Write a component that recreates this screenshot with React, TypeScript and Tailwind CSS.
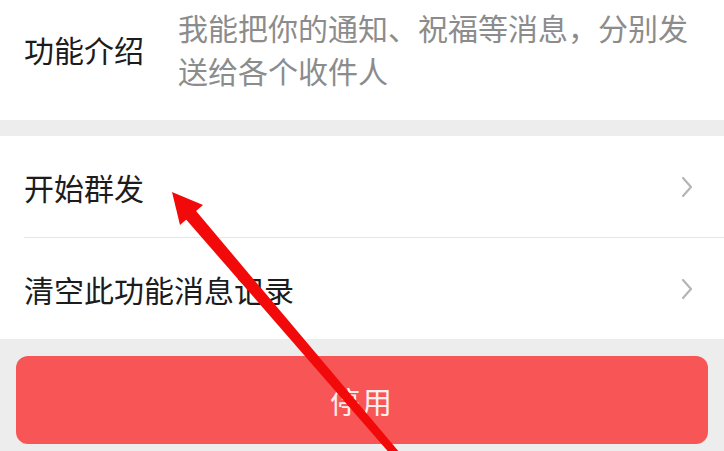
import React from "react";

const font = { fontFamily: '"Noto Sans CJK SC", "Noto Sans", sans-serif' };

function Chevron() {
  return (
    <svg width="14" height="24" viewBox="0 0 14 24" className="shrink-0">
      <path d="M3 3 L11 12 L3 21" fill="none" stroke="#b5b5b5" strokeWidth="2.2" strokeLinecap="round" strokeLinejoin="round" />
    </svg>
  );
}

export default function App() {
  return (
    <div
      className="relative w-[724px] h-[451px] overflow-hidden bg-[#ededed]"
      style={{ fontFamily: '"Noto Sans CJK SC", "Noto Sans", sans-serif' }}
    >
      {/* Intro section */}
      <div className="bg-white h-[120px] flex items-start pt-[6px] pl-[24px] pr-[24px]">
        <div className="w-[154px] shrink-0 h-[86px] flex items-center text-[30px] text-[#1c1c1c] leading-none">
          功能介绍
        </div>
        <div className="text-[30px] leading-[43px] text-[#8c8c8c]">
          我能把你的通知、祝福等消息，分别发送给各个收件人
        </div>
      </div>

      <div className="h-[16px]" />

      {/* Rows */}
      <div className="bg-white">
        <div className="h-[101px] flex items-center justify-between pl-[24px] pr-[30px]">
          <span className="text-[30px] text-[#1c1c1c] leading-none">开始群发</span>
          <Chevron />
        </div>
        <div className="ml-[24px] h-px bg-[#e6e6e6]" />
        <div className="h-[101px] flex items-center justify-between pl-[24px] pr-[30px]">
          <span className="text-[30px] text-[#1c1c1c] leading-none">清空此功能消息记录</span>
          <Chevron />
        </div>
      </div>

      {/* Button */}
      <div className="pt-[17px] px-[16px]">
        <div className="h-[88px] rounded-[12px] bg-[#f85656] flex items-center justify-center">
          <span className="text-[30px] text-white/90 leading-none tracking-[2px]">停用</span>
        </div>
      </div>

      {/* Red annotation arrow */}
      <svg
        className="absolute inset-0 pointer-events-none"
        width="724"
        height="451"
        viewBox="0 0 724 451"
      >
        <polygon
          points="195,209.8 185,218.2 397.7,462.6 403.7,457.4"
          fill="#f20a0a"
        />
        <polygon points="172,192 203,205 180,225" fill="#f20a0a" />
      </svg>
    </div>
  );
}
